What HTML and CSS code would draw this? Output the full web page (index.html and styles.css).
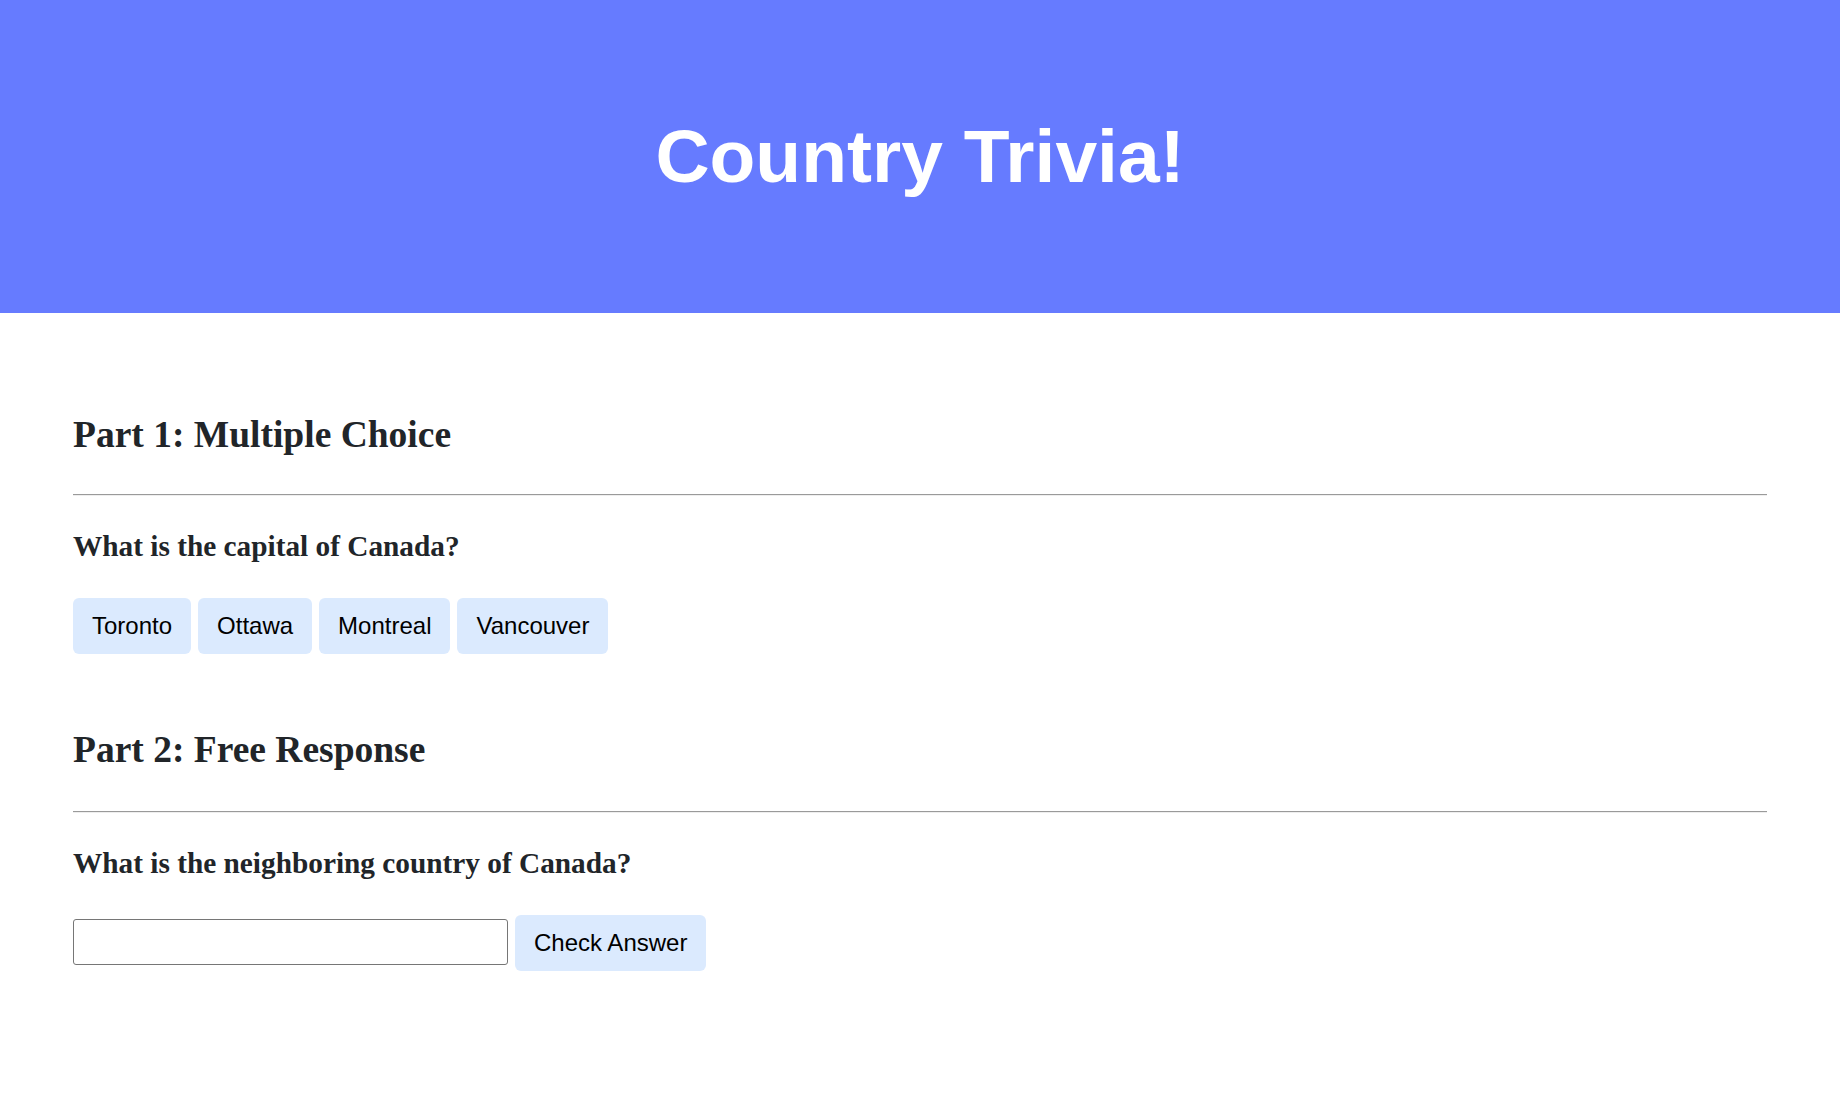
FILE: index.html
```html
<!DOCTYPE html>
<html lang="en">
<head>
<meta charset="utf-8">
<title>Trivia!</title>
<link rel="stylesheet" href="styles.css">
</head>
<body>
<header class="banner">
  <h1 class="banner-title">Country Trivia!</h1>
</header>
<main class="content">
  <section class="part">
    <h2 class="part-title">Part 1: Multiple Choice</h2>
    <hr class="divider">
    <h3 class="question">What is the capital of Canada?</h3>
    <div class="choices">
      <button class="choice">Toronto</button>
      <button class="choice">Ottawa</button>
      <button class="choice">Montreal</button>
      <button class="choice">Vancouver</button>
    </div>
  </section>
  <section class="part part-second">
    <h2 class="part-title">Part 2: Free Response</h2>
    <hr class="divider divider-second">
    <h3 class="question">What is the neighboring country of Canada?</h3>
    <div class="response">
      <input class="answer-input" type="text">
      <button class="choice">Check Answer</button>
    </div>
  </section>
</main>
</body>
</html>
```
FILE: styles.css
```css
html, body {
  margin: 0;
  padding: 0;
  background: #ffffff;
}

body {
  font-family: "Liberation Serif", "Times New Roman", serif;
  color: #212529;
}

.banner {
  background: #667bff;
  height: 313px;
  box-sizing: border-box;
  padding-top: 114px;
  text-align: center;
}

.banner-title {
  margin: 0;
  font-family: "Liberation Sans", Arial, sans-serif;
  font-weight: bold;
  font-size: 75px;
  line-height: 84px;
  color: #ffffff;
}

.content {
  padding: 101px 73px 0;
}

.part-title {
  margin: 0;
  font-size: 37.5px;
  line-height: 42px;
  font-weight: bold;
}

.divider {
  margin: 38px 0 0;
  border: 0;
  border-top: 1px solid #9a9a9a;
  border-bottom: 1px solid #eeeeee;
  height: 0;
}

.divider-second {
  margin-top: 40px;
}

.question {
  margin: 34px 0 0;
  font-size: 29.3px;
  line-height: 32px;
  font-weight: bold;
}

.choices,
.response {
  display: flex;
  align-items: center;
  gap: 7px;
  margin-top: 36px;
}

.choice {
  font-family: "Liberation Sans", Arial, sans-serif;
  font-size: 24px;
  color: #000000;
  background: #dbeafe;
  border: 0;
  border-radius: 6px;
  height: 56px;
  padding: 0 19px;
  cursor: pointer;
}

.part-second {
  margin-top: 75px;
}

.answer-input {
  width: 435px;
  height: 46px;
  box-sizing: border-box;
  border: 1px solid #767676;
  border-radius: 3px;
  font-size: 20px;
  padding: 0 8px;
  margin-bottom: 2px;
}
```
